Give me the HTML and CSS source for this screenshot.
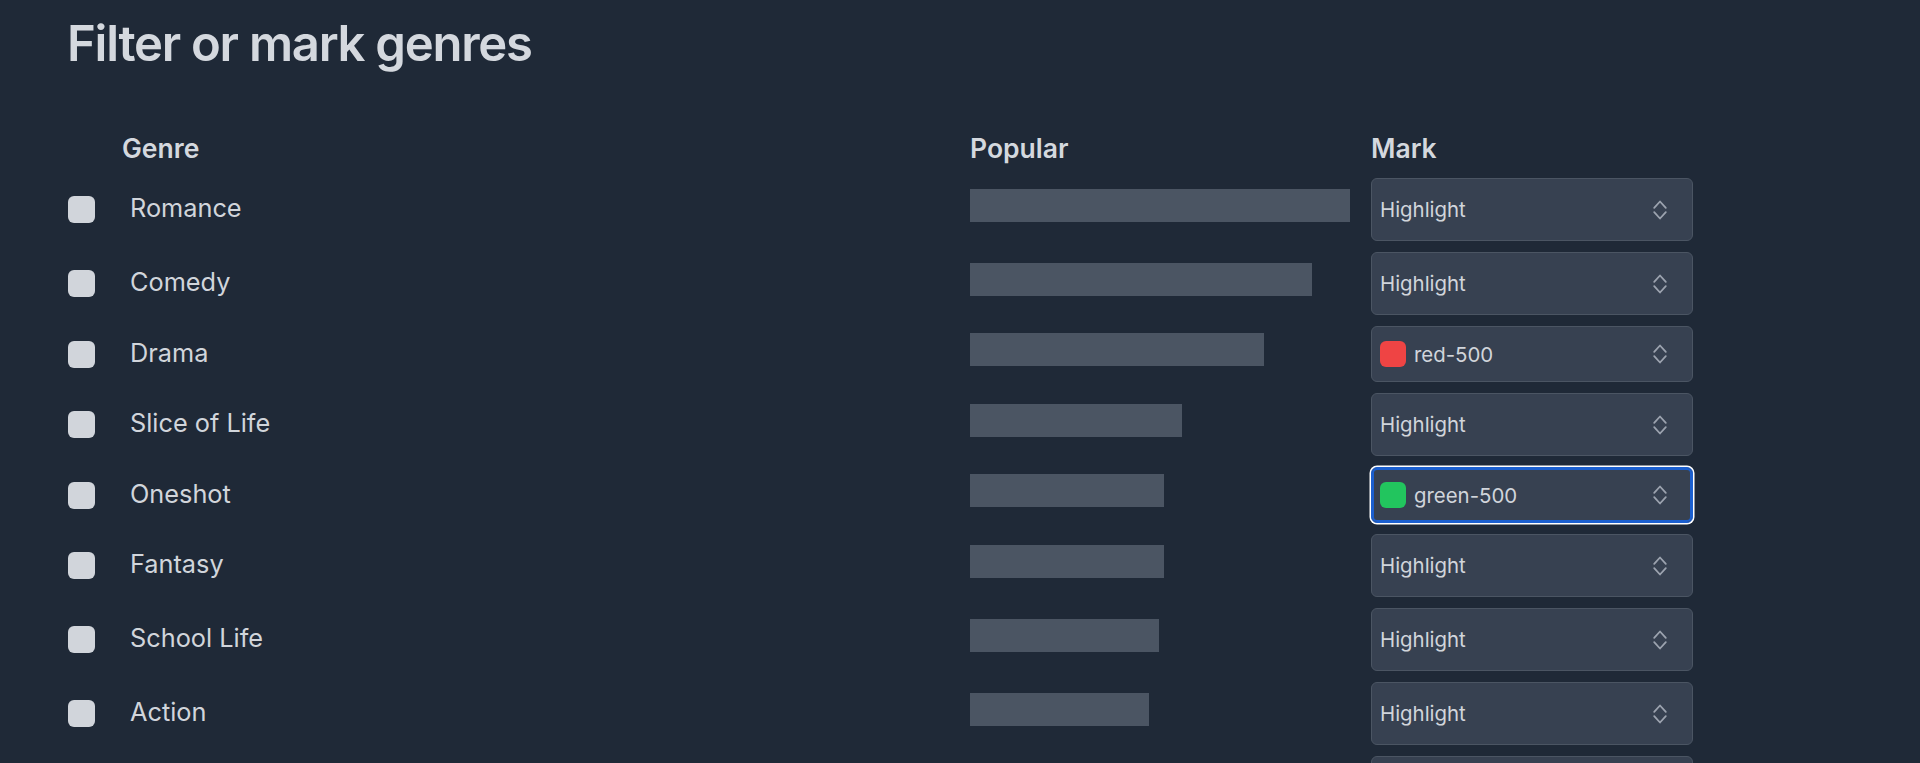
FILE: index.html
```html
<!DOCTYPE html>
<html lang="en">
<head>
<meta charset="utf-8">
<title>Filter or mark genres</title>
<link rel="stylesheet" href="styles.css">
</head>
<body>
<main class="page">
  <h1 class="title">Filter or mark genres</h1>
  <div class="table">
    <div class="row head">
      <div></div>
      <div class="th">Genre</div>
      <div class="th">Popular</div>
      <div class="th">Mark</div>
    </div>

    <div class="row">
      <div class="cell"><span class="check"></span></div>
      <div class="name">Romance</div>
      <div class="cell"><span class="bar" style="width:380px"></span></div>
      <div class="select"><span class="label">Highlight</span><svg class="chev" viewBox="0 0 16 24"><path d="M2.2 9.8 8 3.5 13.8 9.8M2.2 14.2 8 20.5 13.8 14.2"/></svg></div>
    </div>

    <div class="row">
      <div class="cell"><span class="check"></span></div>
      <div class="name">Comedy</div>
      <div class="cell"><span class="bar" style="width:342px"></span></div>
      <div class="select"><span class="label">Highlight</span><svg class="chev" viewBox="0 0 16 24"><path d="M2.2 9.8 8 3.5 13.8 9.8M2.2 14.2 8 20.5 13.8 14.2"/></svg></div>
    </div>

    <div class="row">
      <div class="cell"><span class="check"></span></div>
      <div class="name">Drama</div>
      <div class="cell"><span class="bar" style="width:294px"></span></div>
      <div class="select color"><span class="swatch red"></span><span class="label">red-500</span><svg class="chev" viewBox="0 0 16 24"><path d="M2.2 9.8 8 3.5 13.8 9.8M2.2 14.2 8 20.5 13.8 14.2"/></svg></div>
    </div>

    <div class="row">
      <div class="cell"><span class="check"></span></div>
      <div class="name">Slice of Life</div>
      <div class="cell"><span class="bar" style="width:212px"></span></div>
      <div class="select"><span class="label">Highlight</span><svg class="chev" viewBox="0 0 16 24"><path d="M2.2 9.8 8 3.5 13.8 9.8M2.2 14.2 8 20.5 13.8 14.2"/></svg></div>
    </div>

    <div class="row">
      <div class="cell"><span class="check"></span></div>
      <div class="name">Oneshot</div>
      <div class="cell"><span class="bar" style="width:194px"></span></div>
      <div class="select color focused"><span class="swatch green"></span><span class="label">green-500</span><svg class="chev" viewBox="0 0 16 24"><path d="M2.2 9.8 8 3.5 13.8 9.8M2.2 14.2 8 20.5 13.8 14.2"/></svg></div>
    </div>

    <div class="row">
      <div class="cell"><span class="check"></span></div>
      <div class="name">Fantasy</div>
      <div class="cell"><span class="bar" style="width:194px"></span></div>
      <div class="select"><span class="label">Highlight</span><svg class="chev" viewBox="0 0 16 24"><path d="M2.2 9.8 8 3.5 13.8 9.8M2.2 14.2 8 20.5 13.8 14.2"/></svg></div>
    </div>

    <div class="row">
      <div class="cell"><span class="check"></span></div>
      <div class="name">School Life</div>
      <div class="cell"><span class="bar" style="width:189px"></span></div>
      <div class="select"><span class="label">Highlight</span><svg class="chev" viewBox="0 0 16 24"><path d="M2.2 9.8 8 3.5 13.8 9.8M2.2 14.2 8 20.5 13.8 14.2"/></svg></div>
    </div>

    <div class="row">
      <div class="cell"><span class="check"></span></div>
      <div class="name">Action</div>
      <div class="cell"><span class="bar" style="width:179px"></span></div>
      <div class="select"><span class="label">Highlight</span><svg class="chev" viewBox="0 0 16 24"><path d="M2.2 9.8 8 3.5 13.8 9.8M2.2 14.2 8 20.5 13.8 14.2"/></svg></div>
    </div>

    <div class="row">
      <div class="cell"><span class="check"></span></div>
      <div class="name">Adventure</div>
      <div class="cell"><span class="bar" style="width:170px"></span></div>
      <div class="select"><span class="label">Highlight</span><svg class="chev" viewBox="0 0 16 24"><path d="M2.2 9.8 8 3.5 13.8 9.8M2.2 14.2 8 20.5 13.8 14.2"/></svg></div>
    </div>
  </div>
</main>
</body>
</html>
```

FILE: styles.css
```css
html, body {
  margin: 0;
  padding: 0;
  background: #1f2937;
  height: 100%;
  overflow: hidden;
}

body {
  font-family: Inter, "Noto Sans", "Liberation Sans", sans-serif;
  color: #d1d5db;
}

.page {
  padding: 0 0 0 64px;
}

.title {
  margin: 14px 0 0 3px;
  font-size: 49px;
  line-height: 60px;
  font-weight: 600;
  letter-spacing: -1.25px;
  color: #d4d8de;
}

.table {
  margin-top: 58px;
  display: flex;
  flex-direction: column;
  row-gap: 11px;
}

.row {
  display: grid;
  grid-template-columns: 58px 848px 401px 322px;
  align-items: center;
}

.row.head {
  margin-bottom: 3px;
}

.th {
  font-size: 26.5px;
  line-height: 32px;
  font-weight: 600;
  color: #d4d8de;
}

.cell {
  display: flex;
  align-items: center;
}

.check {
  display: block;
  width: 27px;
  height: 27px;
  margin-left: 4px;
  border-radius: 6px;
  background: #d1d5db;
}

.name {
  padding: 0 0 3px 8px;
  font-size: 25.3px;
  line-height: 32px;
  color: #d1d5db;
}

.bar {
  display: block;
  height: 33px;
  margin-bottom: 9px;
  background: #4b5563;
}

.select {
  box-sizing: border-box;
  height: 63px;
  display: flex;
  align-items: center;
  padding: 0 24px 0 8px;
  background: #374151;
  border: 1.5px solid #4b5563;
  border-radius: 6px;
  font-size: 20.4px;
  color: #d1d5db;
}

.select.color {
  height: 56px;
}

.select.focused {
  border-color: #1b5fcf;
  box-shadow: inset 0 0 0 2px #1b5fcf, 0 0 0 1.5px #ffffff;
}

.label {
  flex: 1;
}

.swatch {
  width: 26px;
  height: 26px;
  border-radius: 6px;
  margin-right: 8px;
}

.swatch.red { background: #ef4444; }
.swatch.green { background: #22c55e; }

.chev {
  width: 16px;
  height: 24px;
  fill: none;
  stroke: #9ca3af;
  stroke-width: 1.8;
  stroke-linecap: round;
  stroke-linejoin: round;
}
```
